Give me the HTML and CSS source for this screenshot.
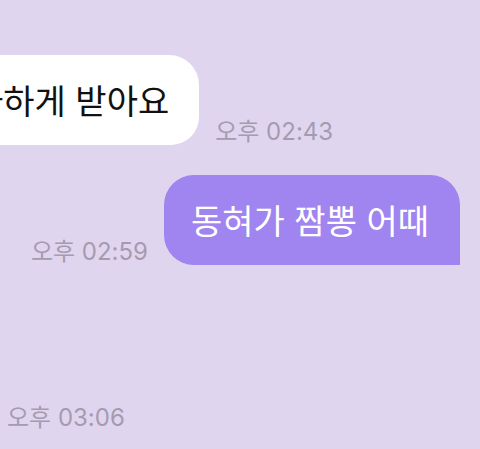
FILE: index.html
```html
<!DOCTYPE html>
<html lang="ko">
<head>
  <meta charset="UTF-8">
  <meta name="viewport" content="width=device-width, initial-scale=1.0">
  <title>채팅</title>
  <link rel="stylesheet" href="styles.css">
</head>
<body>
  <div class="chat">
    <div class="row received">
      <div class="bubble bubble-in">다하게 받아요</div>
      <span class="time">오후 02:43</span>
    </div>

    <div class="row sent">
      <span class="time">오후 02:59</span>
      <div class="bubble bubble-out">동혀가 짬뽕 어때</div>
    </div>

    <div class="row received last">
      <span class="time">오후 03:06</span>
    </div>
  </div>
</body>
</html>
```

FILE: styles.css
```css
* {
  margin: 0;
  padding: 0;
  box-sizing: border-box;
  font-family: 'Noto Sans CJK KR', 'Noto Sans', sans-serif;
}

body {
  background-color: #e0d5ee;
  min-height: 100vh;
  overflow: hidden;
}

.chat {
  display: flex;
  flex-direction: column;
  padding-top: 55px;
}

.row {
  display: flex;
  align-items: flex-end;
  gap: 16px;
}

.received {
  justify-content: flex-start;
}

.sent {
  justify-content: flex-end;
  margin-top: 30px;
  padding-right: 20px;
}

.last {
  margin-top: 141px;
  padding-left: 7px;
}

.bubble {
  height: 90px;
  display: flex;
  align-items: center;
  font-size: 34px;
  line-height: 1;
}

.bubble-in {
  margin-left: -48px;
  padding: 0 30px 0 20px;
  background-color: #fff;
  color: #111;
  border-radius: 0 30px 28px 0;
}

.bubble-out {
  padding: 0 31px 0 27px;
  background-color: #a084f0;
  color: #fff;
  border-radius: 30px 30px 0 30px;
}

.time {
  font-family: 'Inter', 'Noto Sans CJK KR', sans-serif;
  font-size: 24px;
  color: #a59bb1;
  line-height: 1;
  padding-bottom: 1px;
  white-space: nowrap;
}
```
